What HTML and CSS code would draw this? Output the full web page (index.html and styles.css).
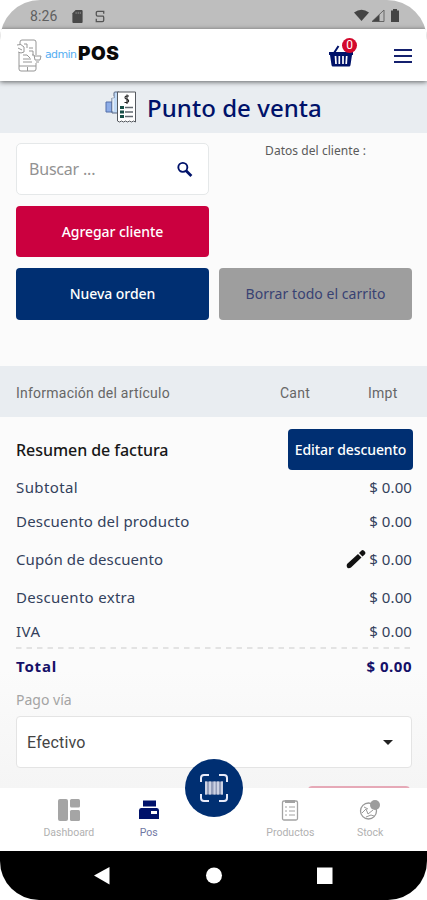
FILE: index.html
```html
<!DOCTYPE html>
<html lang="es">
<head>
<meta charset="utf-8">
<title>Punto de venta</title>
<link rel="stylesheet" href="styles.css">
</head>
<body>
<div class="phone">
  <div class="status">
    <span class="clock">8:26</span>
    <svg class="sd" width="11" height="13" viewBox="0 0 11 14"><path d="M3.500 0H10q1 0 1 1v12q0 1-1 1H1q-1 0-1-1V3.500z" fill="#484848"/><path d="M4 2v2.300M6.300 2v2.300M8.500 2v2.300" stroke="#888"/></svg>
    <svg class="sync" width="10" height="13" viewBox="0 0 10 14"><path d="M9 4V1.500H2.500Q1 1.500 1 3v2q0 1.500 1.500 1.500H8Q9 6.500 9 8v3q0 1.500-1.500 1.500H1V9.500M1 6.500h8" fill="none" stroke="#555" stroke-width="1.400"/></svg>
    <span class="grow"></span>
    <svg class="signals" width="46" height="14" viewBox="0 0 46 14"><path d="M0 3.500Q7.500-2 15 3.500L7.500 12z" fill="#444"/><path d="M18 12.500L30 1v11.500z" fill="none" stroke="#666"/><path d="M18 12.500l7.500-7v7z" fill="#444"/><path d="M39 0h4v1.500h2V13h-8V1.500h2z" fill="#444"/></svg>
  </div>
  <header class="header">
    <svg class="logo-mark" width="26" height="34" viewBox="0 0 26 34" fill="none" stroke="#969696"><path d="M4 6V3q0-2 2-2h12q2 0 2 2v13M20 24v6q0 2-2 2H5q-2 0-2-2V14M3 27h17M11.500 28v4M7 16h4l3 3M7 20h8M7 23h9M13 9h4M13 12h4v4M16 16h2l1 5h5l1-4h-7M20 23h3"/><path d="M1 6q4-2 7 2v5q-3 2-6 0M2 9l4 2M8 5h3v4"/></svg>
    <span class="logo-admin">admin</span><span class="logo-pos">POS</span>
    <span class="grow"></span>
    <div class="cart">
      <svg width="25" height="22" viewBox="0 0 25 22"><path d="M0 7h24v3h-1l-1.500 10q-.2 1.500-1.500 1.500H4Q2.700 21.500 2.500 20L1 10H0z" fill="#00126a"/><path d="M5 8l4.500-7M19 8l-4-6" stroke="#00126a" stroke-width="2"/><path d="M6.500 11l.5 8M10.300 11v8M14 11v8M17.700 11l-.5 8" stroke="#fff" stroke-width="1.700"/></svg>
      <span class="badge">0</span>
    </div>
    <div class="menu"><i></i><i></i><i></i></div>
  </header>
  <div class="title">
    <svg width="32" height="33" viewBox="0 0 32 33"><path d="M1 11h6v10H1z" fill="#8dade8" stroke="#536fa9"/><path d="M7 7h2V2q0-1 1-1h4v21H7z" fill="#c2dbf7" stroke="#586783"/><path d="M8 5v15" stroke="#fff" stroke-width="1"/><path d="M12.500 1h18v30l-2-1-2 1-2-1-2 1-2-1-2 1-2-1-2 1-2-1z" fill="#fff" stroke="#55595f"/><path d="M24 5h-2.500q-1.500 0-1.500 1.500T21.500 8t2 1.500-1.500 2h-2.500M22 3.500V13" fill="none" stroke="#222" stroke-width="1.100"/><path d="M15 16.500h4M15 21h4M15 25.500h4" stroke="#174f47" stroke-width="3"/><path d="M20 16.500h8M20 21h8M20 25.500h8" stroke="#626970" stroke-width="1.700"/></svg>
    <h1>Punto de venta</h1>
  </div>
  <main class="content">
    <div class="actions">
      <div class="search"><span>Buscar ...</span><svg width="16" height="17" viewBox="0 0 17 17" fill="none" stroke="#00126a"><circle cx="6.200" cy="6.200" r="4.800" stroke-width="2"/><path d="M9.700 9.700l5.600 5.600" stroke-width="3"/></svg></div>
      <div class="client">Datos del cliente :</div>
      <button class="btn red"><span>Agregar cliente</span></button>
      <span></span>
      <button class="btn"><span>Nueva orden</span></button>
      <button class="btn gray"><span>Borrar todo el carrito</span></button>
    </div>
    <div class="table-head"><span class="item">Información del artículo</span><span class="qty">Cant</span><span class="amount">Impt</span></div>
    <section class="summary">
      <div class="row first"><h2>Resumen de factura</h2><button class="edit"><span>Editar descuento</span></button></div>
      <div class="row r34"><span class="l-sub">Subtotal</span><b>$ 0.00</b></div>
      <div class="row r34"><span>Descuento del producto</span><b>$ 0.00</b></div>
      <div class="row r42"><span class="l-cup">Cupón de descuento</span><svg width="20" height="20" viewBox="0 0 20 20" fill="#111"><path d="M1 15L12 5l3.500 3.500L5 18.500q-1.500 1-3.500.5Q0 17 1 15zM13 4l2.500-2.500q1.200-1 2.500.2l1 1q1 1.200 0 2.500L16.500 7.500z"/></svg><b>$ 0.00</b></div>
      <div class="row r34"><span class="l-extra">Descuento extra</span><b>$ 0.00</b></div>
      <div class="row r34"><span class="l-iva">IVA</span><b>$ 0.00</b></div>
      <svg class="dash" width="396" height="2"><path d="M0 1h396" stroke="#dcdcdc" stroke-width="1.500" stroke-dasharray="5.500 5"/></svg>
      <div class="row total"><span>Total</span><b>$ 0.00</b></div>
      <div class="pay">Pago vía</div>
      <div class="select"><span>Efectivo</span><svg width="10" height="5" viewBox="0 0 10 5"><path d="M0 0h10L5 5z" fill="#222"/></svg></div>
      <div class="peek"></div>
    </section>
  </main>
  <nav class="tabs">
    <div class="tab"><svg width="22" height="22" viewBox="0 0 22 22" fill="#a5a5a5"><rect width="10" height="22" rx="2"/><rect x="12" width="10" height="8.500" rx="1.500"/><rect x="12" y="11" width="10" height="11" rx="1.500"/></svg><span>Dashboard</span></div>
    <div class="tab active"><svg width="22" height="22" viewBox="0 0 22 22" fill="#00126a"><path d="M5 1.500h13v6H5z"/><path d="M3 9h16q2 0 2 2.500V20H1v-8.500Q1 9 3 9z"/><path d="M13 12h6v3h-6z" fill="#fff"/></svg><span>Pos</span></div>
    <div class="scan"><svg width="28" height="28" viewBox="0 0 28 28" fill="none" stroke="#e8ebfa" stroke-width="2"><path d="M1 8V4q0-3 3-3h5M19 1h5q3 0 3 3v4M27 20v4q0 3-3 3h-5M9 27H4q-3 0-3-3v-4"/><path d="M5 14h18" stroke="#929cb9" stroke-width="13"/><path d="M6 7.500v13M10 7.500v13M14.500 7.500v13M18 7.500v13M22 7.500v13" stroke="#ccd2e4"/></svg></div>
    <div class="tab"><svg width="18" height="22" viewBox="0 0 18 22" fill="none" stroke="#a2a2a2"><rect x="1.500" y="2" width="15" height="19" rx="1.500" stroke-width="1.300"/><path d="M4 2.500h10" stroke-width="3"/><path d="M4 8h2M8 8h6M4 12h2M8 12h6M4 16h2M8 16h6"/></svg><span>Productos</span></div>
    <div class="tab"><svg width="22" height="22" viewBox="0 0 22 22"><circle cx="9.500" cy="12" r="8" fill="none" stroke="#999" stroke-width="1.300"/><path d="M3 14l4-4 2 5 5-4M5 8l4 2M7 18l5-2 3 1" fill="none" stroke="#999"/><circle cx="16" cy="6" r="5" fill="#9d9d9d"/></svg><span>Stock</span></div>
  </nav>
  <div class="system"><svg width="427" height="49" viewBox="0 0 427 49" fill="#fff"><path d="M94 24.500L109.500 16v17.500z"/><circle cx="214" cy="24.500" r="8"/><rect x="317" y="16.500" width="15.500" height="16.500"/></svg></div>
</div>
</body>
</html>
```
FILE: styles.css
```css
* { box-sizing: border-box; }
body { margin: 0; background: #fff; font-family: "Noto Sans", "Open Sans", sans-serif; color: #33415c; }
h1, h2 { margin: 0; font-weight: 400; }
button { border: 0; font: inherit; padding: 0; }
span { white-space: nowrap; }
.phone { width: 427px; height: 900px; display: flex; flex-direction: column; overflow: hidden; border-radius: 40px 40px 39px 39px; background: #fbfbfb; }
.grow { flex: 1; }
.status { height: 29px; flex: none; background: #bebebe; display: flex; align-items: center; padding: 3px 27px 0 30px; }
.clock { font: 14px Roboto, sans-serif; color: #606060; width: 42px; letter-spacing: .15px; }
.sync { margin-left: 12px; }
.header { height: 52px; flex: none; background: #fff; display: flex; align-items: center; padding: 0 15px 0 16px; box-shadow: 0 1px 5px #0009; position: relative; z-index: 1; }
.logo-mark { margin: 2px 3px 0 0; }
.logo-admin { font: 11px "DejaVu Sans", sans-serif; color: #55aef2; width: 33px; letter-spacing: -.65px; margin-top: -1px; }
.logo-pos { font: 900 19px Inter, sans-serif; color: #0a0a0a; letter-spacing: .5px; margin-top: -3px; }
.cart { position: relative; height: 22px; margin: 2px 40px 0 0; }
.badge { position: absolute; left: 13px; top: -7px; width: 15px; height: 15px; border-radius: 50%; background: #d3092d; color: #fff; font: 12px/15px Roboto, sans-serif; text-align: center; }
.menu { display: flex; flex-direction: column; gap: 4px; width: 18px; margin-top: 2px; }
.menu i { height: 2px; background: #14206e; }
.title { height: 52px; flex: none; background: #e9edf1; display: flex; align-items: center; gap: 10px; padding-left: 105px; }
.title h1 { font-size: 24px; font-weight: 500; color: #00126a; letter-spacing: .05px; white-space: nowrap; }
.content { height: 655px; flex: none; overflow: hidden; background: linear-gradient(#fbfbfb 0 82%, #f5f5f5); }
.actions { display: grid; grid-template-columns: 193px 193px; grid-template-rows: 52px 51px 52px; gap: 11px 10px; padding: 10px 16px 0; }
.search { background: #fff; border: 1px solid #e5e8e9; border-radius: 5px; padding: 0 15px 0 12px; display: flex; align-items: center; justify-content: space-between; font-size: 16px; color: #929292; letter-spacing: -.2px; }
.client { text-align: center; font-size: 12px; line-height: 15px; color: #5a5a5a; letter-spacing: .05px; }
.btn { background: #002f72; color: #fff; border-radius: 4px; font-size: 14px; display: flex; align-items: center; justify-content: center; font-weight: 500; letter-spacing: -.05px; padding-bottom: 1px; }
.red { background: #cb003f; }
.gray { background: #9e9e9e; color: #384273; font-weight: 400; letter-spacing: .05px; }
.table-head { height: 51px; margin-top: 46px; background: #e9edf1; display: flex; align-items: center; padding: 2px 16px 0; font: 14px Roboto, sans-serif; color: #666; letter-spacing: .23px; }
.item { width: 264px; }
.qty { width: 88px; }
.summary { padding: 11px 15px 0 16px; }
.row { display: flex; align-items: center; font-size: 15px; color: #33415c; }
.row > span, .row > h2 { flex: 1; letter-spacing: .2px; }
.row b { font-weight: 400; width: 44px; text-align: right; white-space: nowrap; letter-spacing: .1px; }
.first { height: 42px; color: #171717; margin-right: -1px; }
.row h2 { font-size: 16px; font-weight: 500; letter-spacing: -.05px; padding-top: 1px; }
.edit { width: 125px; height: 41px; border-radius: 4px; background: #002f72; color: #fff; font-size: 14px; font-weight: 500; letter-spacing: -.1px; }
.r34 { height: 34px; }
.row > .l-sub { letter-spacing: .4px; }
.row > .l-iva { letter-spacing: .5px; }
.row > .l-extra { letter-spacing: .3px; }
.row > .l-cup { letter-spacing: .1px; }
.r42 { height: 42px; }
.r42 svg { margin-right: 2px; }
.dash { display: block; margin-top: -1px; }
.total { height: 35px; padding-bottom: 2px; }
.total > span, .total b { font-weight: 700; color: #151068; }
.row.total > span { letter-spacing: .8px; }
.total b { width: 48px; letter-spacing: .5px; }
.pay { height: 32px; line-height: 31px; font-size: 14px; color: #a4a4a4; }
.select { width: 396px; height: 52px; background: #fff; border: 1px solid #e4e4e4; border-radius: 4px; padding: 0 18px 0 10px; display: flex; align-items: center; justify-content: space-between; font: 16px Roboto, sans-serif; color: #444; letter-spacing: .2px; }
.peek { width: 102px; height: 20px; margin: 18px 0 0 292px; border-radius: 4px; background: #e6a9b7; }
.tabs { height: 63px; flex: none; background: #fff; display: flex; position: relative; padding: 0 17px 0 29px; justify-content: space-between; }
.tab { width: 80px; display: flex; flex-direction: column; align-items: center; padding-top: 11px; font: 10.5px/14px Roboto, sans-serif; color: #b1b1b1; }
.tab span { margin-top: 5px; }
.active { color: #7078a4; }
.scan { position: absolute; left: 185px; top: -29px; width: 58px; height: 58px; border-radius: 50%; background: #002f72; display: flex; align-items: center; justify-content: center; }
.tab:nth-child(4) { margin-left: 62px; }
.system { height: 49px; flex: none; background: #000; }
.system svg { display: block; }
```
